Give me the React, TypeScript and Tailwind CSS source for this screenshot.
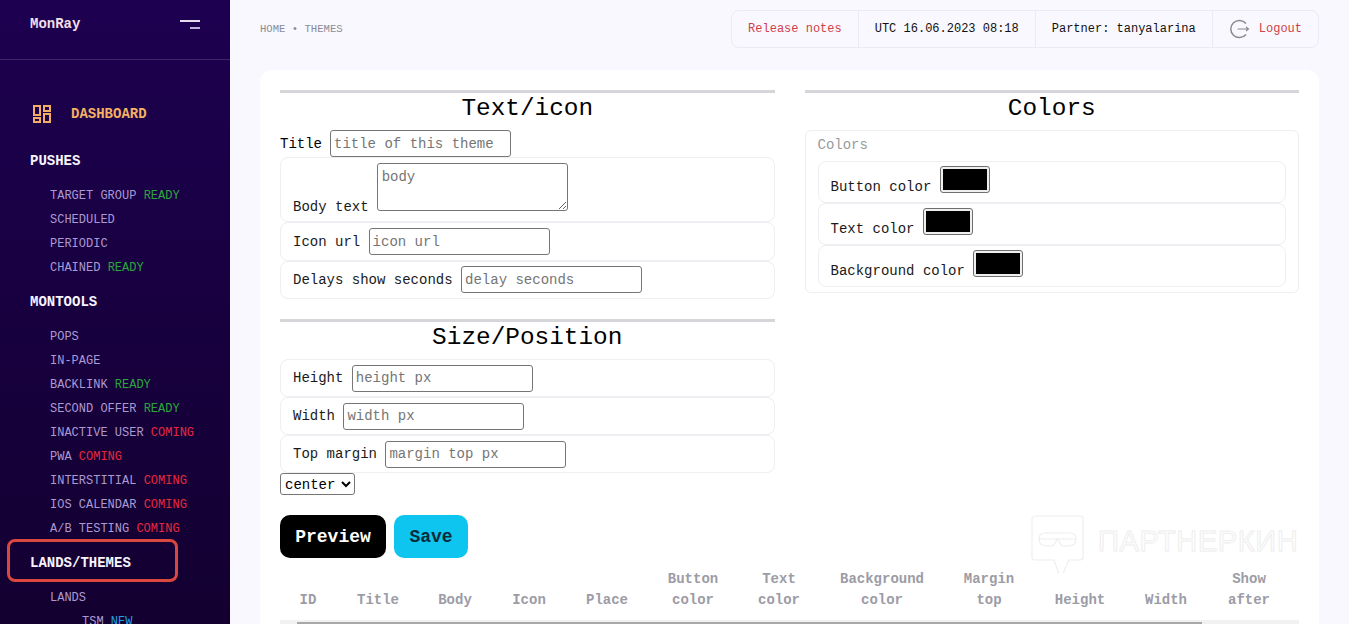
import React from 'react';

const mono = 'font-["Liberation_Mono",monospace]';

type Tag = 'READY' | 'COMING' | 'NEW';

const tagColor: Record<Tag, string> = {
    READY: 'text-[#2aa63a]',
    COMING: 'text-[#e8283f]',
    NEW: 'text-[#1f9fe6]',
};

const NavItem = ({ label, tag, indent }: { label: string; tag?: Tag; indent?: boolean }) => (
    <div className={`h-6 leading-6 text-xs whitespace-nowrap text-[#ab9ad2] ${indent ? 'pl-[82px]' : 'pl-[50px]'}`}>
        {label}
        {tag && <span className={`font-medium ${tagColor[tag]}`}> {tag}</span>}
    </div>
);

const NavTitle = ({ children, className }: { children: React.ReactNode; className: string }) => (
    <div className={`h-6 leading-6 pl-[30px] text-sm font-bold text-[#f8f4ff] ${className}`}>{children}</div>
);

const Sidebar = () => (
    <aside className="w-[230px] shrink-0 h-full overflow-hidden bg-gradient-to-b from-[#1d0050] to-[#130030]">
        <div className="h-[60px] border-b border-[#3b2668] flex items-start justify-between pl-[30px] pr-[30px] pt-[13px]">
            <span className="text-sm leading-5 pt-px font-bold text-[#f0dfe6]">MonRay</span>
            <div className="flex flex-col items-end gap-[5px] pt-[7px]">
                <div className="w-5 h-0.5 bg-[#e6deee]" />
                <div className="w-2.5 h-0.5 bg-[#bfb0dc]" />
            </div>
        </div>
        <div className="h-[26px] mt-[41px] flex items-center pl-[33px] gap-5">
            <svg width="18" height="18" viewBox="0 0 18 18" fill="none" stroke="#f2ad63" strokeWidth="2">
                <rect x="1" y="1" width="6" height="9" />
                <rect x="11" y="1" width="6" height="5" />
                <rect x="1" y="13" width="6" height="4" />
                <rect x="11" y="9" width="6" height="8" />
            </svg>
            <span className="text-sm font-bold text-[#f4b063]">DASHBOARD</span>
        </div>
        <NavTitle className="mt-[22px] mb-[11px]">PUSHES</NavTitle>
        <NavItem label="TARGET GROUP" tag="READY" />
        <NavItem label="SCHEDULED" />
        <NavItem label="PERIODIC" />
        <NavItem label="CHAINED" tag="READY" />
        <NavTitle className="mt-2.5 mb-[11px]">MONTOOLS</NavTitle>
        <NavItem label="POPS" />
        <NavItem label="IN-PAGE" />
        <NavItem label="BACKLINK" tag="READY" />
        <NavItem label="SECOND OFFER" tag="READY" />
        <NavItem label="INACTIVE USER" tag="COMING" />
        <NavItem label="PWA" tag="COMING" />
        <NavItem label="INTERSTITIAL" tag="COMING" />
        <NavItem label="IOS CALENDAR" tag="COMING" />
        <NavItem label="A/B TESTING" tag="COMING" />
        <NavTitle className="mt-2.5 mb-[11px]">LANDS/THEMES</NavTitle>
        <NavItem label="LANDS" />
        <NavItem label="TSM" tag="NEW" indent />
    </aside>
);

const TopBar = () => (
    <div className="flex h-[70px] items-start justify-between">
        <div className="pt-[23px] text-[10.6px] leading-3 text-[#8b8b98]">HOME • THEMES</div>
        <div className="mt-2.5 h-[38px] flex items-center rounded-lg border border-[#ecebf3] text-xs whitespace-nowrap">
            <div className="h-full flex items-center px-4 text-[#d23f4a]">Release notes</div>
            <div className="h-full flex items-center px-4 border-l border-[#ecebf3] text-[#111]">UTC 16.06.2023 08:18</div>
            <div className="h-full flex items-center px-4 border-l border-[#ecebf3] text-[#111]">Partner: tanyalarina</div>
            <div className="h-full flex items-center pl-[17px] pr-4 gap-[9px] border-l border-[#ecebf3] text-[#d23f4a]">
                <svg width="20" height="20" viewBox="0 0 20 20" fill="none" stroke="#8a8a8f" strokeWidth="1.5">
                    <path d="M16 4.5A8.6 8.6 0 1 0 16 15.5" />
                    <path d="M7.5 10H18.5M16 8l2.5 2-2.5 2" stroke="#8a8a8f" strokeWidth="1.2" />
                </svg>
                Logout
            </div>
        </div>
    </div>
);

const SectionTitle = ({ children }: { children: React.ReactNode }) => (
    <div className="border-t-[3px] border-[#d6d6da] h-10 leading-8 text-[24.4px] text-center text-black">{children}</div>
);

const TextInput = ({ placeholder, className = '' }: { placeholder: string; className?: string }) => (
    <input
        placeholder={placeholder}
        className={`w-[181px] h-[27px] pl-[3px] pr-1 text-sm border border-[#767676] rounded-[3px] placeholder:text-[#757575] ${className}`}
    />
);

const Row = ({ label, placeholder, height = 'h-[38px]', inputClass }: { label: string; placeholder: string; height?: string; inputClass?: string }) => (
    <div className={`${height} flex items-center gap-[8.4px] pl-3 border border-[#eeeef3] rounded-lg text-sm whitespace-nowrap text-[#1a1a1a]`}>
        <span>{label}</span>
        <TextInput placeholder={placeholder} className={inputClass} />
    </div>
);

const ColorRow = ({ label }: { label: string }) => (
    <div className="h-[42px] flex items-start gap-[8.4px] pl-3 pt-1 border border-[#eeeef3] rounded-lg text-sm whitespace-nowrap text-[#1a1a1a]">
        <span className="mt-[11px] leading-[21px]">{label}</span>
        <input
            type="color"
            defaultValue="#000000"
            className="w-[50px] h-[27px] p-0 border border-[#6f6f6f] rounded-[3px] bg-[#efefef] [&::-webkit-color-swatch-wrapper]:p-[2px] [&::-webkit-color-swatch]:border-0"
        />
    </div>
);

const columns: { top?: string; label: string; width: string }[] = [
    { label: 'ID', width: 'w-[56px]' },
    { label: 'Title', width: 'w-[84px]' },
    { label: 'Body', width: 'w-[70px]' },
    { label: 'Icon', width: 'w-[78px]' },
    { label: 'Place', width: 'w-[78px]' },
    { top: 'Button', label: 'color', width: 'w-[94px]' },
    { top: 'Text', label: 'color', width: 'w-[78px]' },
    { top: 'Background', label: 'color', width: 'w-[128px]' },
    { top: 'Margin', label: 'top', width: 'w-[86px]' },
    { label: 'Height', width: 'w-[96px]' },
    { label: 'Width', width: 'w-[76px]' },
    { top: 'Show', label: 'after', width: 'w-[90px]' },
];

const Watermark = () => (
    <div className="absolute left-[1031px] top-[515px] flex items-start gap-[14px] pointer-events-none">
        <svg width="53" height="58" viewBox="0 0 53 58" fill="none" stroke="#eeeeee" strokeWidth="1.2">
            <path d="M4 1H49a3 3 0 0 1 3 3V42a3 3 0 0 1-3 3H38L33 56a3 3 0 0 1-6 0L23 45H4a3 3 0 0 1-3-3V4a3 3 0 0 1 3-3Z" />
            <path d="M8 24C8 19 11 18 14 18H39C42 18 45 19 45 24C45 29 42 31 37 31H33C30 31 28 27 27 24H26C25 27 23 31 20 31H16C11 31 8 29 8 24Z" />
            <path d="M8 24H45" />
        </svg>
        <span className='mt-[8px] text-[29px] leading-9 tracking-[0.6px] font-["Liberation_Sans",sans-serif] text-transparent [-webkit-text-stroke:1px_#eeeeee]'>
            ПАРТНЕРКИН
        </span>
    </div>
);

export default function App() {
    return (
        <div className={`relative flex h-[624px] overflow-hidden bg-[#f8f8fe] ${mono}`}>
            <Sidebar />
            <main className="flex-1 min-w-0 px-[30px]">
                <TopBar />
                <div className="rounded-xl bg-white p-5 pb-0">
                    <div className="grid grid-cols-2 gap-[30px] items-start">
                        <div>
                            <SectionTitle>Text/icon</SectionTitle>
                            <div className="h-[27px] flex items-center gap-2 text-sm">
                                <span>Title</span>
                                <TextInput placeholder="title of this theme" />
                            </div>
                            <div className="h-[65px] flex items-start gap-2 pl-3 pt-[5px] border border-[#eeeef3] rounded-lg text-sm text-[#1a1a1a]">
                                <span className="mt-[34px] leading-[21px]">Body text</span>
                                <textarea
                                    placeholder="body"
                                    className="w-[191px] h-12 px-1 pt-[3px] text-sm border border-[#767676] rounded-[3px] placeholder:text-[#757575]"
                                />
                            </div>
                            <Row label="Icon url" placeholder="icon url" height="h-[39px]" />
                            <Row label="Delays show seconds" placeholder="delay seconds" inputClass="-mt-px" />
                            <div className="mt-5">
                                <SectionTitle>Size/Position</SectionTitle>
                            </div>
                            <Row label="Height" placeholder="height px" />
                            <Row label="Width" placeholder="width px" />
                            <Row label="Top margin" placeholder="margin top px" />
                            <select className="block w-[75px] h-[22px] pt-px text-sm border border-[#767676] rounded-[3px]">
                                <option>center</option>
                            </select>
                        </div>
                        <div>
                            <SectionTitle>Colors</SectionTitle>
                            <div className="h-[163px] px-3 border border-[#eeeef3] rounded-md">
                                <div className="h-[30px] leading-[29px] text-sm text-[#9a9a9a]">Colors</div>
                                <ColorRow label="Button color" />
                                <ColorRow label="Text color" />
                                <ColorRow label="Background color" />
                            </div>
                        </div>
                    </div>
                    <div className="flex gap-2 mt-5">
                        <button className="w-[106px] h-[43px] rounded-[10px] bg-black text-white text-lg font-bold">Preview</button>
                        <button className="w-[74px] h-[43px] rounded-[10px] bg-[#0ec5f0] text-[#0b2a3a] text-lg font-bold">Save</button>
                    </div>
                    <table className="mt-[11px] table-fixed">
                        <thead>
                            <tr>
                                {columns.map((col, i) => (
                                    <th key={i} className={`${col.width} align-bottom text-center text-sm leading-[21px] font-bold text-[#9c9ca6]`}>
                                        {col.top && <div>{col.top}</div>}
                                        <div>{col.label}</div>
                                    </th>
                                ))}
                            </tr>
                        </thead>
                    </table>
                    <div className="mt-[9px] h-4 pt-0.5 bg-[#f1f1f1]">
                        <div className="ml-[17px] w-[905px] h-3 bg-[#a8a8a8]" />
                    </div>
                </div>
            </main>
            <Watermark />
            <div className="absolute left-[7px] top-[539px] w-[171px] h-[43px] border-[3.5px] border-[#d9473f] rounded-lg pointer-events-none" />
        </div>
    );
}
